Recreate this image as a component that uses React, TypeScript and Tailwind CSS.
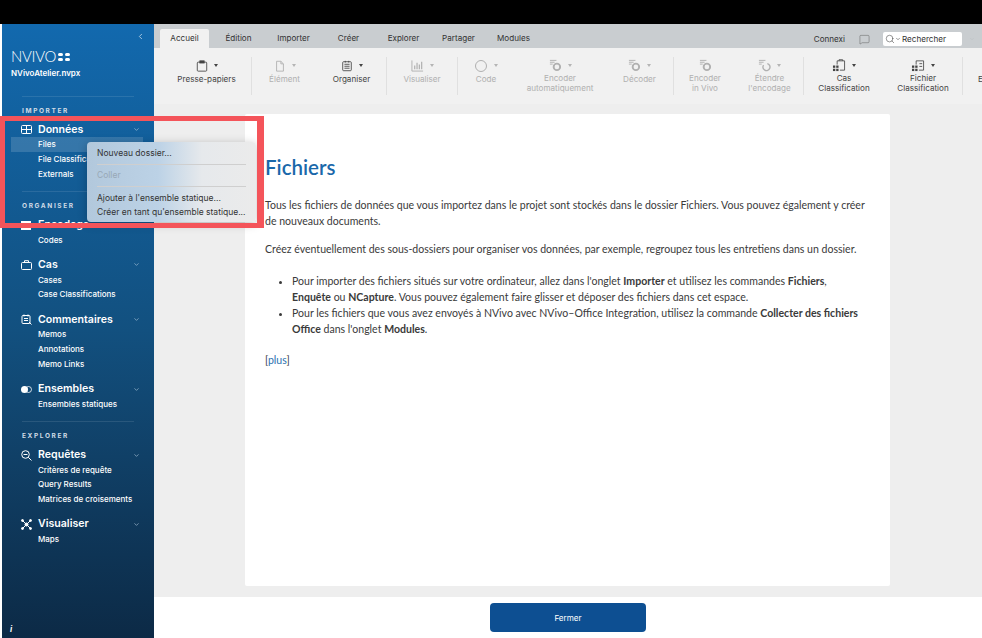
import { ReactNode } from "react"
import { ChevronDown, ChevronLeft, Search, MessageSquare } from "lucide-react"

const ui = "font-['Inter',sans-serif]"

function Caret({ dim }: { dim?: boolean }) {
  return <span className={`inline-block ml-[6px] border-x-[2.5px] border-t-[3px] border-x-transparent ${dim ? "border-t-[#b5b5b5]" : "border-t-[#444]"}`} />
}

function Clipboard() {
  return (
    <svg width="12" height="12" viewBox="0 0 14 14" fill="none" stroke="currentColor" strokeWidth="1">
      <rect x="1.500" y="2.500" width="11" height="10.500" rx="1" />
      <rect x="4.500" y="1" width="5" height="2.500" fill="currentColor" />
    </svg>
  )
}

function Doc() {
  return (
    <svg width="12" height="12" viewBox="0 0 14 14" fill="none" stroke="currentColor" strokeWidth="1">
      <path d="M3 1.500h5l3 3v8.500H3z" />
      <path d="M8 1.500v3h3" />
    </svg>
  )
}

function Organize() {
  return (
    <svg width="12" height="12" viewBox="0 0 14 14" fill="none" stroke="currentColor" strokeWidth="1">
      <rect x="2" y="2" width="10" height="10.500" rx="1" />
      <path d="M4 5h6M4 7.300h6M4 9.600h6" />
      <path d="M5 1v2M9 1v2" />
    </svg>
  )
}

function Bars() {
  return (
    <svg width="13" height="13" viewBox="0 0 14 14" fill="none" stroke="currentColor" strokeWidth="1">
      <path d="M1 1.500V13h12" />
      <path d="M4 11V7M6.500 11V4M9 11V6M11.500 11V3" strokeWidth="1.300" />
    </svg>
  )
}

function Circle() {
  return (
    <svg width="14" height="14" viewBox="0 0 14 14" fill="none" stroke="currentColor" strokeWidth="1">
      <circle cx="7" cy="7" r="5.500" />
    </svg>
  )
}

function Coding({ open }: { open?: boolean }) {
  return (
    <svg width="13" height="13" viewBox="0 0 14 14" fill="none" stroke="currentColor" strokeWidth="1">
      <path d="M1 1.500h7M1 3.500h5M1 5.500h3" />
      {open ? <path d="M6 6.500a3.800 3.800 0 1 0 4-1.500" strokeWidth="1.500" /> : <circle cx="8.500" cy="8.500" r="3.500" strokeWidth="2" />}
    </svg>
  )
}

function CaseClass({ file }: { file?: boolean }) {
  return (
    <svg width="14" height="13" viewBox="0 0 15 14" fill="none" stroke="#444" strokeWidth="0.900">
      <path d="M5.500 6V2h8v10H8.500" />
      {file ? <path d="M9 5h3M9 8h3" /> : <path d="M7.500 2V.8h4V2" />}
      <rect x="1" y="7" width="2.500" height="2.500" fill="#444" stroke="none" />
      <rect x="4.500" y="7" width="2.500" height="2.500" fill="#444" stroke="none" />
      <rect x="1" y="10.500" width="2.500" height="2.500" fill="#444" stroke="none" />
      <rect x="4.500" y="10.500" width="2.500" height="2.500" fill="#444" stroke="none" />
    </svg>
  )
}

type RibbonProps = { w: string; icon: ReactNode; lines: string[]; dim?: boolean; caret?: boolean; sep?: boolean }

function RibbonItem({ w, icon, lines, dim, caret = true, sep }: RibbonProps) {
  return (
    <div className={`${w} shrink-0 h-[38px] flex flex-col items-center text-[8.100px] leading-[10px] ${dim ? "text-[#b0b0b0]" : "text-[#444]"} ${sep ? "border-r border-[#e0e0e0]" : ""}`}>
      <div className={`${lines.length === 1 ? "h-[17px]" : "h-[16px]"} flex items-center`}>
        {icon}
        {caret && <Caret dim={dim} />}
      </div>
      {lines.map((l) => (
        <div key={l} className="whitespace-nowrap">{l}</div>
      ))}
    </div>
  )
}

function Ribbon() {
  return (
    <div className="h-[56px] bg-[#f1f1f1] flex pt-[9px] overflow-hidden">
      <RibbonItem w="w-[98px] pl-[8px]" sep icon={<Clipboard />} lines={["Presse-papiers"]} />
      <RibbonItem w="w-[65px]" dim icon={<Doc />} lines={["Élément"]} />
      <RibbonItem w="w-[70px]" sep icon={<Organize />} lines={["Organiser"]} />
      <RibbonItem w="w-[71px]" sep dim icon={<Bars />} lines={["Visualiser"]} />
      <RibbonItem w="w-[56px]" dim icon={<Circle />} lines={["Code"]} />
      <RibbonItem w="w-[92px]" dim icon={<Coding />} lines={["Encoder", "automatiquement"]} />
      <RibbonItem w="w-[68px]" sep dim icon={<Coding />} lines={["Décoder"]} />
      <RibbonItem w="w-[62px]" dim caret={false} icon={<Coding />} lines={["Encoder", "in Vivo"]} />
      <RibbonItem w="w-[68px]" sep dim icon={<Coding open />} lines={["Étendre", "l'encodage"]} />
      <RibbonItem w="w-[80px]" icon={<CaseClass />} lines={["Cas", "Classification"]} />
      <RibbonItem w="w-[79px]" sep icon={<CaseClass file />} lines={["Fichier", "Classification"]} />
      <div className="pl-[15px] pt-[17px] text-[8.100px] leading-[10px] text-[#444]">E</div>
    </div>
  )
}

function Tabs() {
  const tabs = ["Édition", "Importer", "Créer", "Explorer", "Partager", "Modules"]
  return (
    <div className="h-[24px] bg-[#c9cdd0] flex items-end pl-[6px] text-[8.100px] text-[#333]">
      <div className="w-[49px] h-[19px] bg-[#f1f1f1] rounded-t-[2px] flex items-center justify-center">Accueil</div>
      <div className="flex h-[19px] items-center ml-[2px]">
        {tabs.map((t) => (
          <div key={t} className="w-[55px] text-center">{t}</div>
        ))}
      </div>
      <div className="ml-auto h-[24px] pt-[6px] flex items-center">
        <span className="mr-[14px]">Connexi</span>
        <MessageSquare size={11} strokeWidth={1} className="mr-[13px] text-[#555]" />
        <div className="w-[79px] h-[14px] bg-white rounded-[2px] flex items-center pl-[2px]">
          <Search size={10} strokeWidth={1.200} />
          <ChevronDown size={6} strokeWidth={2} className="mr-[1px]" />
          Rechercher
        </div>
        <ChevronDown size={6} strokeWidth={1.500} className="ml-[7px] mr-[7px] text-[#b5b9bc]" />
      </div>
    </div>
  )
}

function NavGroup({ icon, title, items, active }: { icon: ReactNode; title: string; items: string[]; active?: string }) {
  return (
    <div className="mb-[10px]">
      <div className="h-[15.300px] flex items-center pl-[19px] pr-[14px] text-white">
        <span className="w-[17px] flex justify-start">{icon}</span>
        <span className="text-[10.600px] font-semibold">{title}</span>
        <ChevronDown size={7} strokeWidth={2} className="ml-auto text-[#b8cfe2]" />
      </div>
      {items.map((i) => (
        <div key={i} className={`h-[14.700px] leading-[14.700px] pl-[27px] ml-[9px] mr-[11px] text-[8px] font-medium text-white whitespace-nowrap ${i === active ? "bg-white/15" : ""}`}>
          {i}
        </div>
      ))}
    </div>
  )
}

function SectionLabel({ label }: { label: string }) {
  return (
    <div className="mx-[20px] border-t border-white/10 pt-[7px] mb-[3px] h-[23px] text-[6.500px] font-bold tracking-[0.25em] text-[#cfdbe6] leading-[14px]">
      {label}
    </div>
  )
}

function Sidebar() {
  return (
    <aside className={`${ui} relative w-[152px] ml-[2px] shrink-0 h-[614px] bg-gradient-to-b from-[#1269ae] via-[#12507f] to-[#0c2a46] pt-[25px]`}>
      <ChevronLeft size={9} strokeWidth={2} className="absolute right-[9px] top-[8px] text-[#cfe0ee]" />
      <div className="pl-[9px] text-white h-[47px]">
        <div className="flex items-center h-[15px] font-['Lato',sans-serif] text-[15px] font-light tracking-[-0.02em]">
          NVIVO
          <span className="grid grid-cols-2 gap-[2px] ml-[2px]">
            <i className="w-[5px] h-[3px] rounded-full bg-white" />
            <i className="w-[5px] h-[3px] rounded-full bg-white" />
            <i className="w-[5px] h-[3px] rounded-full bg-white" />
            <i className="w-[5px] h-[3px] rounded-full bg-white" />
          </span>
        </div>
        <div className="text-[8px] font-semibold mt-[2px] leading-[14px]">NVivoAtelier.nvpx</div>
      </div>
      <SectionLabel label="IMPORTER" />
      <NavGroup
        icon={
          <svg width="11" height="9" viewBox="0 0 11 9" fill="none" stroke="currentColor" strokeWidth="1">
            <rect x="0.500" y="0.500" width="10" height="8" rx="1" />
            <path d="M0.500 4.500h10M5.500 0.500v8" />
          </svg>
        }
        title="Données"
        items={["Files", "File Classifications", "Externals"]}
        active="Files"
      />
      <SectionLabel label="ORGANISER" />
      <NavGroup
        icon={
          <svg width="10" height="9" viewBox="0 0 10 9" fill="currentColor">
            <path d="M0 0h10v2H0zM0 3.500h10v2H0zM0 7h10v2H0z" />
          </svg>
        }
        title="Encodage"
        items={["Codes"]}
      />
      <NavGroup
        icon={
          <svg width="11" height="10" viewBox="0 0 11 10" fill="none" stroke="currentColor" strokeWidth="1">
            <rect x="0.500" y="2.500" width="10" height="7" rx="1" />
            <path d="M3.500 2.500V.7h4v1.800" />
          </svg>
        }
        title="Cas"
        items={["Cases", "Case Classifications"]}
      />
      <NavGroup
        icon={
          <svg width="11" height="11" viewBox="0 0 11 11" fill="none" stroke="currentColor" strokeWidth="1">
            <rect x="1" y="1.500" width="8" height="8" rx="1" />
            <path d="M3 .5v2M7 .5v2M3 4.500h4M3 6.500h4M8 8l2.500 2.500" />
          </svg>
        }
        title="Commentaires"
        items={["Memos", "Annotations", "Memo Links"]}
      />
      <NavGroup
        icon={
          <svg width="11" height="7" viewBox="0 0 11 7">
            <circle cx="7.500" cy="3.500" r="3" fill="none" stroke="white" strokeWidth="0.800" />
            <circle cx="3.500" cy="3.500" r="3.500" fill="white" />
          </svg>
        }
        title="Ensembles"
        items={["Ensembles statiques"]}
      />
      <SectionLabel label="EXPLORER" />
      <NavGroup
        icon={
          <svg width="11" height="11" viewBox="0 0 11 11" fill="none" stroke="currentColor" strokeWidth="1">
            <circle cx="4.500" cy="4.500" r="3.800" />
            <path d="M7.300 7.300l3.200 3.200M2.500 4.500h4" />
          </svg>
        }
        title="Requêtes"
        items={["Critères de requête", "Query Results", "Matrices de croisements"]}
      />
      <NavGroup
        icon={
          <svg width="11" height="11" viewBox="0 0 11 11" fill="none" stroke="currentColor" strokeWidth="1">
            <path d="M2 2l7 7M9 2l-7 7" />
            <circle cx="5.500" cy="5.500" r="1.500" fill="currentColor" />
            <circle cx="1.500" cy="1.500" r="1" fill="currentColor" />
            <circle cx="9.500" cy="1.500" r="1" fill="currentColor" />
            <circle cx="1.500" cy="9.500" r="1" fill="currentColor" />
            <circle cx="9.500" cy="9.500" r="1" fill="currentColor" />
          </svg>
        }
        title="Visualiser"
        items={["Maps"]}
      />
      <div className="absolute left-[8px] bottom-[3px] text-[8px] italic font-bold text-white">i</div>
    </aside>
  )
}

function Article() {
  return (
    <div className="flex-1 min-h-0 bg-[#eeeeee] pt-[10px] pb-[11px] pl-[91px] pr-[92px]">
      <div className="h-full bg-white rounded-[2px] pl-[20px] pr-[24px] pt-[40px] font-['Lato',sans-serif] text-[10.550px] leading-[16px] text-[#3a3a3a]">
        <h1 className="text-[20.500px] leading-[26px] font-semibold text-[#1a68aa] mb-[17px]">Fichiers</h1>
        <p className="mb-[12px]">
          Tous les fichiers de données que vous importez dans le projet sont stockés dans le dossier Fichiers. Vous pouvez également y créer de nouveaux documents.
        </p>
        <p className="mb-[16px]">
          Créez éventuellement des sous-dossiers pour organiser vos données, par exemple, regroupez tous les entretiens dans un dossier.
        </p>
        <ul className="list-disc pl-[27px] mb-[15px]">
          <li>
            Pour importer des fichiers situés sur votre ordinateur, allez dans l'onglet <b>Importer</b> et utilisez les commandes <b>Fichiers</b>, <b>Enquête</b> ou <b>NCapture</b>. Vous pouvez également faire glisser et déposer des fichiers dans cet espace.
          </li>
          <li>
            Pour les fichiers que vous avez envoyés à NVivo avec NVivo–Office Integration, utilisez la commande <b>Collecter des fichiers Office</b> dans l'onglet <b>Modules</b>.
          </li>
        </ul>
        <p>
          [<span className="text-[#2a72b0]">plus</span>]
        </p>
      </div>
    </div>
  )
}

function ContextMenu() {
  return (
    <div className={`${ui} absolute left-[87px] top-[142px] w-[169px] h-[80px] rounded-[4px] bg-[linear-gradient(90deg,#b2c8dc_0%,#bcd2e6_42%,#e6e9ec_68%,#ebebeb_100%)] shadow-[0_2px_10px_rgba(0,0,0,0.25)] px-[10px] pt-[6px] text-[8.500px] leading-[11px] text-[#333]`}>
      <div className="h-[13px]">Nouveau dossier...</div>
      <div className="border-t border-[#cfcfcf] mt-[3px] pt-[5px] h-[22px] text-[#98a8b6]">Coller</div>
      <div className="border-t border-[#cfcfcf] pt-[6px]">Ajouter à l'ensemble statique...</div>
      <div className="mt-[3px] whitespace-nowrap">Créer en tant qu'ensemble statique...</div>
    </div>
  )
}

export default function App() {
  return (
    <div className="relative w-[982px] h-[638px] bg-white overflow-hidden">
      <div className="h-[24px] bg-black" />
      <div className="flex h-[614px]">
        <Sidebar />
        <main className={`${ui} flex-1 min-w-0 flex flex-col`}>
          <Tabs />
          <Ribbon />
          <Article />
          <div className="h-[41px] bg-white flex justify-center pt-[6px] shrink-0">
            <button className="w-[156px] h-[29px] bg-[#0d4f92] rounded-[4px] text-white text-[8.100px] pt-[1px]">Fermer</button>
          </div>
        </main>
      </div>
      <ContextMenu />
      <div className="absolute left-0 top-[116px] w-[264px] h-[112px] border-[5px] border-r-[7px] border-[#f4545a] pointer-events-none" />
    </div>
  )
}
